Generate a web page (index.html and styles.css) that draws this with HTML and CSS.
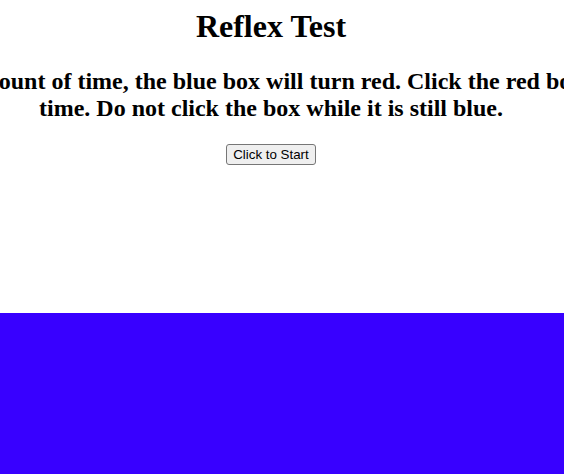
FILE: index.html
```html
<!DOCTYPE html>
<html>
<head>
<meta charset="utf-8">
<title>Reflex Test</title>
<link rel="stylesheet" href="styles.css">
</head>
<body>
<div class="page">
  <h1 class="title">Reflex Test</h1>
  <h2 class="instructions">After a random amount of time, the blue box will turn red. Click the red box to test reaction time. Do not click the box while it is still blue.</h2>
  <button class="start">Click to Start</button>
</div>
<div class="box"></div>
</body>
</html>
```
FILE: styles.css
```css
html, body {
  margin: 0;
  padding: 0;
  overflow: hidden;
}
.page {
  display: flex;
  flex-direction: column;
  align-items: center;
  font-family: "Liberation Serif", "Times New Roman", serif;
  width: 542px;
}
.title {
  font-size: 32px;
  font-weight: bold;
  margin: 8px 0 0;
  line-height: 37px;
}
.instructions {
  font-size: 24px;
  font-weight: bold;
  text-align: center;
  width: 960px;
  flex-shrink: 0;
  margin: 23px 0 0;
  line-height: 27px;
}
.start {
  margin-top: 22px;
  height: 21px;
  padding: 1px 6px;
  font-family: "Liberation Sans", Arial, sans-serif;
  font-size: 13.33px;
  color: #000;
  background: #efefef;
  border: 1px solid #767676;
  border-radius: 3px;
}
.box {
  margin-top: 148px;
  width: 564px;
  height: 200px;
  background: #3800ff;
}
```
